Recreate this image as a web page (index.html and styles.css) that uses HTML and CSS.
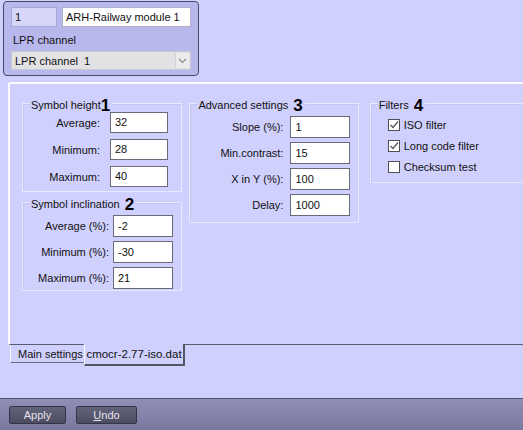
FILE: index.html
```html
<!DOCTYPE html>
<html>
<head>
<meta charset="utf-8">
<title>LPR settings</title>
<link rel="stylesheet" href="styles.css">
</head>
<body>
<div class="app">
  <div class="top-panel">
    <div class="id-row">
      <div class="field field-id">1</div>
      <div class="field field-name">ARH-Railway module 1</div>
    </div>
    <div class="top-label">LPR channel</div>
    <div class="select">
      <span class="select-text">LPR channel&nbsp; 1</span>
      <span class="select-btn"><svg width="9" height="6" viewBox="0 0 9 6"><polyline points="1,1 4.5,4.5 8,1" fill="none" stroke="#8a8a8a" stroke-width="1.2"/></svg></span>
    </div>
  </div>

  <div class="pane">
    <div class="col col1">
      <div class="group g-height">
        <div class="gtitle"><span>Symbol height</span><b class="num tight">1</b></div>
        <div class="rows">
          <div class="row"><span class="lbl">Average:</span><div class="input">32</div></div>
          <div class="row"><span class="lbl">Minimum:</span><div class="input">28</div></div>
          <div class="row"><span class="lbl">Maximum:</span><div class="input">40</div></div>
        </div>
      </div>
      <div class="group g-incl">
        <div class="gtitle"><span>Symbol inclination</span><b class="num">2</b></div>
        <div class="rows">
          <div class="row"><span class="lbl">Average (%):</span><div class="input">-2</div></div>
          <div class="row"><span class="lbl">Minimum (%):</span><div class="input">-30</div></div>
          <div class="row"><span class="lbl">Maximum (%):</span><div class="input">21</div></div>
        </div>
      </div>
    </div>

    <div class="col col2">
      <div class="group g-adv">
        <div class="gtitle"><span>Advanced settings</span><b class="num">3</b></div>
        <div class="rows">
          <div class="row"><span class="lbl">Slope (%):</span><div class="input">1</div></div>
          <div class="row"><span class="lbl">Min.contrast:</span><div class="input">15</div></div>
          <div class="row"><span class="lbl">X in Y (%):</span><div class="input">100</div></div>
          <div class="row"><span class="lbl">Delay:</span><div class="input">1000</div></div>
        </div>
      </div>
    </div>

    <div class="col col3">
      <div class="group g-filters">
        <div class="gtitle"><span>Filters</span><b class="num">4</b></div>
        <div class="checks">
          <div class="check"><span class="box"><svg width="10" height="10" viewBox="0 0 10 10"><polyline points="1.5,5 4,7.5 9,1.5" fill="none" stroke="#5a5a5a" stroke-width="1.4"/></svg></span><span>ISO filter</span></div>
          <div class="check"><span class="box"><svg width="10" height="10" viewBox="0 0 10 10"><polyline points="1.5,5 4,7.5 9,1.5" fill="none" stroke="#5a5a5a" stroke-width="1.4"/></svg></span><span>Long code filter</span></div>
          <div class="check"><span class="box"></span><span>Checksum test</span></div>
        </div>
      </div>
    </div>
  </div>

  <div class="tabs">
    <div class="tab tab-main">Main settings</div>
    <div class="tab tab-active">cmocr-2.77-iso.dat</div>
  </div>

  <div class="spacer"></div>

  <div class="bottom-bar">
    <div class="btn btn-apply">Apply</div>
    <div class="btn btn-undo"><u>U</u>ndo</div>
  </div>
</div>
</body>
</html>
```

FILE: styles.css
```css
* { box-sizing: border-box; }
html, body { margin: 0; padding: 0; }
body {
  width: 523px;
  height: 430px;
  overflow: hidden;
  background: #d0d0fe;
  font-family: "Liberation Sans", Arial, sans-serif;
  font-size: 11px;
  color: #111;
}
.app { display: flex; flex-direction: column; height: 430px; }

/* top panel */
.top-panel {
  margin: 1px 0 0 3px;
  width: 196px;
  height: 75px;
  border: 1px solid #4a4a68;
  border-radius: 4px;
  background: #b8b8ec;
  padding: 5px 0 0 7px;
  flex: none;
}
.id-row { display: flex; gap: 5px; }
.field {
  height: 20px;
  line-height: 18px;
  padding-left: 3px;
  font-size: 11px;
}
.field-id { width: 46px; background: #d6d6f8; border: 1px solid #a8a8d4; }
.field-name { width: 129px; background: #fff; border: 1px solid #b0b0c8; }
.top-label { margin-top: 7px; line-height: 13px; padding-left: 2px; }
.select {
  margin-top: 4px;
  width: 180px;
  height: 19px;
  background: #e2e2e4;
  border: 1px solid #c8c8d0;
  display: flex;
  align-items: center;
  justify-content: space-between;
  padding: 0 1px 0 3px;
}
.select-btn {
  width: 14px;
  height: 15px;
  background: #ececee;
  border-left: 1px solid #d4d4d8;
  display: flex;
  align-items: center;
  justify-content: center;
}

/* tab pane */
.pane {
  margin: 6px 0 0 8px;
  width: 530px;
  height: 263px;
  border-top: 2px solid #fafaff;
  border-left: 2px solid #fafaff;
  border-bottom: 1px solid #5c5c74;
  border-top-left-radius: 3px;
  padding: 19px 0 0 12px;
  display: flex;
  align-items: flex-start;
  flex: none;
}
.col { display: flex; flex-direction: column; }
.col1 { width: 162px; }
.col2 { width: 171px; margin-left: 7px; }
.col3 { width: 170px; margin-left: 11px; }

.group {
  border: 1px solid #e8e8ff;
  box-shadow: inset 1px 1px 0 #c6c6f2;
}
.g-height { height: 89px; }
.g-incl { height: 89px; margin-top: 10px; }
.g-adv { height: 120px; }
.g-filters { height: 80px; }

.gtitle {
  display: flex;
  align-items: baseline;
  width: max-content;
  height: 13px;
  line-height: 13px;
  margin: -7px 0 0 7px;
  padding: 0 2px 0 1px;
  background: #d0d0fe;
  white-space: nowrap;
}
.num {
  font-size: 17px;
  font-weight: bold;
  color: #000;
  margin-left: 5px;
  position: relative;
  top: 2px;
  line-height: 13px;
}
.num.tight { margin-left: 0; }

.rows { display: flex; flex-direction: column; }
.row { display: flex; align-items: center; }
.lbl { text-align: right; white-space: nowrap; }
.input {
  background: #fff;
  border: 1px solid #6a6a7a;
  padding-left: 4px;
  line-height: 19px;
}

.g-height .rows { margin-top: 2px; gap: 6px; }
.g-height .lbl { width: 77px; margin-right: 10px; }
.g-height .input { width: 58px; height: 21px; }

.g-incl .rows { margin-top: 6px; gap: 4px; }
.g-incl .lbl { width: 86px; margin-right: 4px; }
.g-incl .input { width: 60px; height: 22px; line-height: 20px; }

.g-adv .rows { margin-top: 6px; gap: 4px; }
.g-adv .lbl { width: 93px; margin-right: 7px; }
.g-adv .input { width: 60px; height: 22px; line-height: 20px; }

.checks { margin-top: 4px; display: flex; flex-direction: column; padding-left: 17px; }
.check { height: 21px; display: flex; align-items: center; gap: 4px; }
.box {
  width: 12px;
  height: 12px;
  border: 1px solid #4e4e56;
  background: #fff;
  display: flex;
  align-items: center;
  justify-content: center;
}

/* tabs */
.tabs { display: flex; margin-top: -1px; height: 22px; flex: none; }
.tab { white-space: nowrap; }
.tab-main {
  margin: 1px 0 0 10px;
  width: 74px;
  height: 18px;
  border-left: 1px solid #f4f4ff;
  border-bottom: 1px solid #6a6a80;
  padding-left: 7px;
  line-height: 19px;
  overflow: hidden;
}
.tab-active {
  width: 101px;
  height: 22px;
  background: #d0d0fe;
  border-left: 1px solid #fafaff;
  border-right: 2px solid #55556a;
  border-bottom: 2px solid #55556a;
  text-align: center;
  line-height: 20px;
  font-size: 11.5px;
}

.spacer { flex: 1; }

/* bottom bar */
.bottom-bar {
  height: 32px;
  flex: none;
  border-top: 1px solid #50506c;
  background: linear-gradient(#9090b6, #7878a0);
  display: flex;
  gap: 10px;
  padding: 7px 0 0 9px;
}
.btn {
  height: 18px;
  border: 1px solid #33334a;
  border-radius: 2px;
  background: linear-gradient(#62627a, #4c4c62);
  color: #e4e4ee;
  text-align: center;
  line-height: 16px;
  font-size: 11px;
}
.btn-apply { width: 57px; }
.btn-undo { width: 61px; }
```
